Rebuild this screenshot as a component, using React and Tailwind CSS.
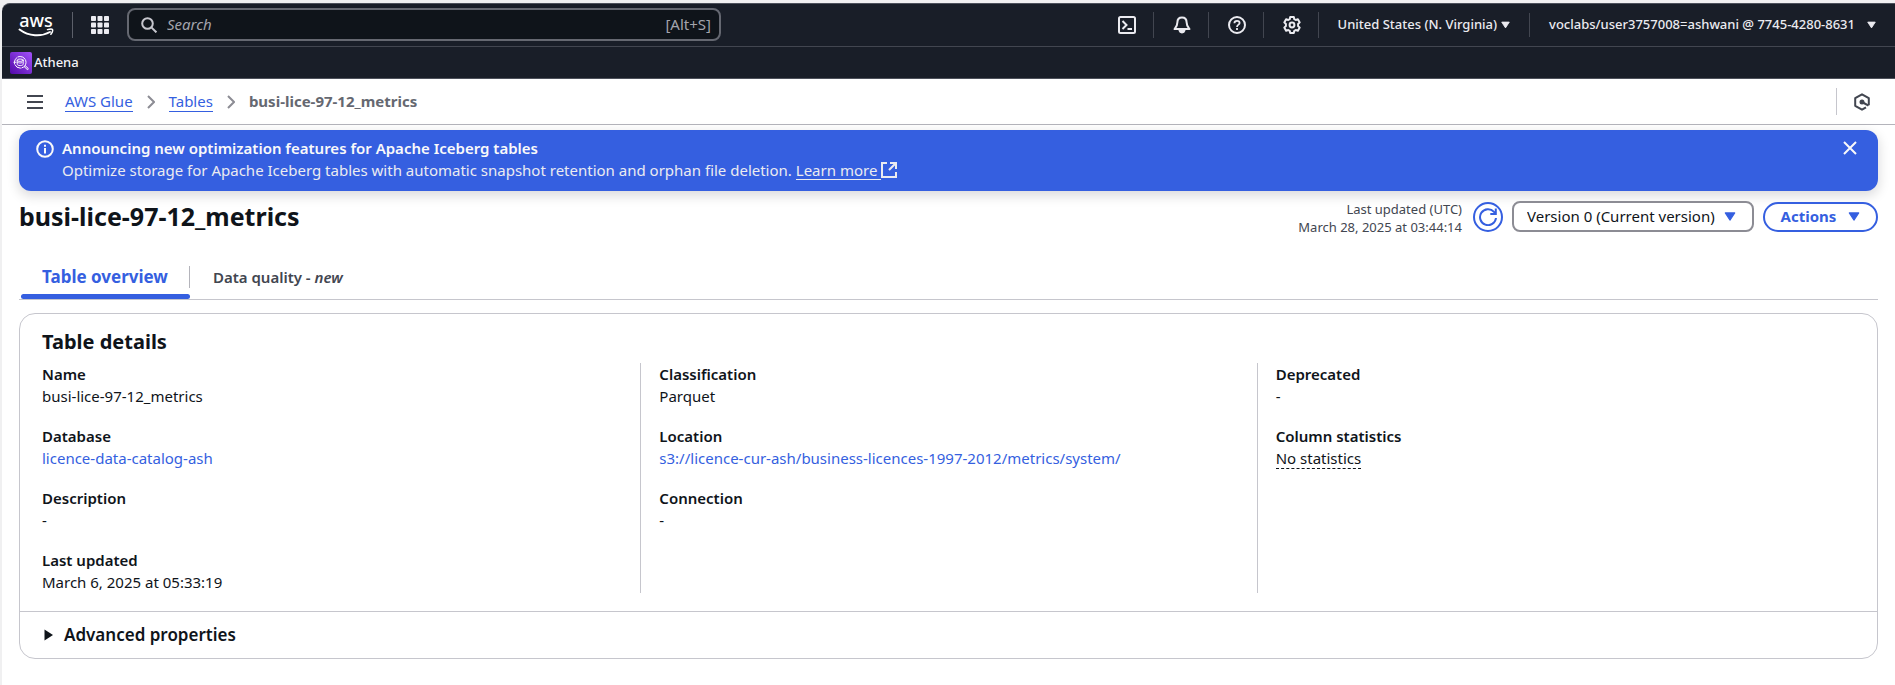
import React from 'react';

const fields = [
  [
    { label: 'Name', value: 'busi-lice-97-12_metrics' },
    { label: 'Database', value: 'licence-data-catalog-ash', kind: 'link' },
    { label: 'Description', value: '-' },
    { label: 'Last updated', value: 'March 6, 2025 at 05:33:19' },
  ],
  [
    { label: 'Classification', value: 'Parquet' },
    {
      label: 'Location',
      value: 's3://licence-cur-ash/business-licences-1997-2012/metrics/system/',
      kind: 'link',
    },
    { label: 'Connection', value: '-' },
  ],
  [
    { label: 'Deprecated', value: '-' },
    { label: 'Column statistics', value: 'No statistics', kind: 'hint' },
  ],
];

function Caret({ className }) {
  return (
    <svg viewBox="0 0 10 8" className={className} aria-hidden="true">
      <path d="M0.8 0.8h8.4L5 7.2z" fill="currentColor" stroke="currentColor" strokeWidth="1" strokeLinejoin="round" />
    </svg>
  );
}

function AwsLogo() {
  return (
    <a href="#home" aria-label="AWS home" className="flex w-9 flex-col items-center">
      <span className="h-4 text-lg leading-4 font-medium text-white">aws</span>
      <svg viewBox="0 0 36 9" className="h-[9px] w-9" fill="none" stroke="#fff" strokeLinecap="round" aria-hidden="true">
        <path d="M1.5 1.5C11 8.5 23 9 32 4" strokeWidth="2" />
        <path d="M29.5 1.6c2.4-.7 4.6-.8 5 0 .4.9-.3 3-1.6 4.700" strokeWidth="1.500" />
      </svg>
    </a>
  );
}

function GridIcon() {
  const cells = [0, 6.5, 13];
  return (
    <svg viewBox="0 0 18 18" className="size-[18px]" fill="currentColor" aria-hidden="true">
      {cells.map((y) => cells.map((x) => <rect key={`${x}-${y}`} x={x} y={y} width="5" height="5" rx="0.8" />))}
    </svg>
  );
}

function AthenaIcon() {
  return (
    <svg viewBox="0 0 22 22" className="size-[22px]" fill="none" stroke="#fff" strokeLinecap="round" aria-hidden="true">
      <defs>
        <linearGradient id="athena" x1="0" y1="1" x2="1" y2="0">
          <stop offset="0" stopColor="#5209a8" />
          <stop offset="1" stopColor="#a352fb" />
        </linearGradient>
      </defs>
      <rect width="22" height="22" rx="2" fill="url(#athena)" stroke="none" />
      <circle cx="10.200" cy="10.300" r="5.800" strokeWidth="1" strokeDasharray="7 1.200" />
      <ellipse cx="10.200" cy="8.200" rx="3" ry="1.200" strokeWidth=".9" />
      <path d="M7.200 8.200v4c0 .8 1.300 1.400 3 1.400s3-.6 3-1.400v-4M7.500 10.300c1.500.9 3 1 4.500.4M4 10.300h2" strokeWidth=".9" />
      <path d="M14.200 14.600l2.800 2.700c.9.800 1.800-.3 1-1.100L15.300 13.700" strokeWidth="1" />
    </svg>
  );
}

function NavIcon({ label, children }) {
  return (
    <button type="button" aria-label={label} className="flex h-[26px] w-[55px] items-center justify-center border-r border-[#424650] pl-0.5 text-[#ebebf0]">
      <svg viewBox="0 0 18 18" className="size-[18px]" fill="none" stroke="currentColor" strokeWidth="2" strokeLinejoin="round" aria-hidden="true">
        {children}
      </svg>
    </button>
  );
}

function TopNav() {
  return (
    <header className="rounded-tl-lg border-t border-b border-[#4d515b] bg-[#191e28] text-white">
      <div className="flex h-[43px] items-center border-b border-[#424650] pb-px">
        <div className="flex flex-1 items-center">
          <div className="flex h-[26px] items-center border-r border-[#5c606a] pr-[18px] pl-4">
            <AwsLogo />
          </div>
          <button type="button" aria-label="Services" className="px-[18px] text-[#ebebf0]">
            <GridIcon />
          </button>
          <label className="flex h-[33px] w-[594px] items-center rounded-lg border-2 border-[#656871] bg-[#0f141a] pr-2 pl-3">
            <svg viewBox="0 0 16 16" className="size-4 text-[#c6c6cd]" fill="none" stroke="currentColor" strokeWidth="2" aria-hidden="true">
              <circle cx="6.500" cy="6.500" r="5.300" />
              <path d="M10.400 10.400l5 5" />
            </svg>
            <input
              type="search"
              aria-label="Search"
              placeholder="Search"
              className="ml-2.5 min-w-0 flex-1 bg-transparent text-[15px] outline-none placeholder:text-[#a4a4ad] placeholder:italic"
            />
            <span className="text-[15px] text-[#a4a4ad]">[Alt+S]</span>
          </label>
        </div>
        <nav className="flex items-center text-[13px] font-medium text-[#ebebf0]">
          <NavIcon label="CloudShell">
            <rect x="1" y="1" width="16" height="16" rx="1.500" />
            <path d="M4.500 5l4 4-4 4M9.500 13h4.500" strokeLinejoin="miter" />
          </NavIcon>
          <NavIcon label="Notifications">
            <path d="M9 1.400C6 1.400 4.400 3.500 4.400 6.200c0 3.800-1.200 5-2.900 6.900h15c-1.700-1.900-2.900-3.100-2.900-6.900C13.600 3.500 12 1.400 9 1.400z" />
            <path d="M6.500 14.500a2.600 2.600 0 0 0 5 0z" fill="currentColor" />
          </NavIcon>
          <NavIcon label="Help">
            <circle cx="9" cy="9" r="8" />
            <path d="M6.400 7.200C6.400 5.600 7.600 4.800 9 4.800s2.600.9 2.600 2.200C11.600 8.700 9 8.600 9 11M9 12v2" strokeWidth="1.800" />
          </NavIcon>
          <NavIcon label="Settings">
            <path d="M7.200 1h3.600l.5 2.200 1.400.8 2.200-.7 1.800 3.100L15.100 8v2l1.600 1.600-1.800 3.100-2.200-.7-1.400.8-.5 2.200H7.200l-.5-2.200-1.400-.8-2.200.7-1.800-3.100L2.900 10V8L1.300 6.400l1.800-3.100 2.200.7 1.400-.8z" />
            <circle cx="9" cy="9" r="2.400" />
          </NavIcon>
          <button type="button" className="flex h-6 items-center gap-1 border-r border-[#424650] px-[19px]">
            United States (N. Virginia)
            <Caret className="h-2 w-[9px]" />
          </button>
          <button type="button" className="flex h-6 items-center gap-3 px-[19px]">
            voclabs/user3757008=ashwani @ 7745-4280-8631
            <Caret className="h-2 w-[9px]" />
          </button>
        </nav>
      </div>
      <div className="flex h-[31px] items-center pl-2">
        <a href="#athena" className="flex items-center gap-0.5 text-[13px] font-medium text-[#f3f3f7]">
          <AthenaIcon />
          Athena
        </a>
      </div>
    </header>
  );
}

function Chevron() {
  return (
    <svg viewBox="0 0 8 14" className="h-3.5 w-2 text-[#8c8c94]" fill="none" stroke="currentColor" strokeWidth="2" aria-hidden="true">
      <path d="M1 1l6 6-6 6" />
    </svg>
  );
}

function Breadcrumbs() {
  return (
    <div className="flex h-[46px] items-center border-b border-[#b4b4bb] px-[25px]">
      <button type="button" aria-label="Open navigation" className="text-[#424650]">
        <svg viewBox="0 0 16 14" className="h-3.5 w-4" stroke="currentColor" strokeWidth="2" aria-hidden="true">
          <path d="M0 1h16M0 7h16M0 13h16" />
        </svg>
      </button>
      <nav aria-label="Breadcrumbs" className="ml-[22px] flex flex-1 items-center gap-3.5 text-[15px] leading-5">
        <a href="#glue" className="border-b border-[#355fe0] text-[#355fe0]">AWS Glue</a>
        <Chevron />
        <a href="#tables" className="border-b border-[#355fe0] text-[#355fe0]">Tables</a>
        <Chevron />
        <span className="pb-px font-bold text-[#656871]">busi-lice-97-12_metrics</span>
      </nav>
      <div className="flex h-[27px] items-center border-l border-[#c6c6cd] pl-[17px]">
        <button type="button" aria-label="Open assistant" className="text-[#424650]">
          <svg viewBox="0 0 16 18" className="h-[18px] w-4" fill="none" stroke="currentColor" strokeWidth="2" strokeLinejoin="round" aria-hidden="true">
            <path d="M14.800 12.300V5.200L8 1.300 1.200 5.200v7.600L8 16.700l4-2.300" />
            <path d="M8 9l6.500 3.600" strokeWidth="2.200" />
            <circle cx="8" cy="9" r="1.500" fill="currentColor" />
          </svg>
        </button>
      </div>
    </div>
  );
}

function Banner() {
  return (
    <section className="flex items-start rounded-xl bg-[#355fe0] px-[17px] pt-[7px] pb-2.5 text-[15px] leading-[22px] text-[#f9f9fa] shadow-[0_4px_12px_1px_rgba(0,7,22,0.14)]">
      <svg viewBox="0 0 18 18" className="mt-[3px] size-[18px]" fill="none" stroke="currentColor" strokeWidth="2" aria-hidden="true">
        <circle cx="9" cy="9" r="7.800" />
        <path d="M9 8v5.500M9 4.800v2" />
      </svg>
      <div className="ml-2 flex-1">
        <h2 className="font-semibold">Announcing new optimization features for Apache Iceberg tables</h2>
        <p className="text-[#ebebf0]">
          Optimize storage for Apache Iceberg tables with automatic snapshot retention and orphan file deletion.{' '}
          <a href="#learn-more" className="inline-flex items-center">
            <span className="h-[21px] border-b border-current pr-1">Learn more</span>
            <svg viewBox="0 0 16 16" className="size-4" fill="none" stroke="currentColor" strokeWidth="2" aria-hidden="true">
              <path d="M6 1H1v14h14v-5M9 1h6v6M15 1L8 8" />
            </svg>
          </a>
        </p>
      </div>
      <button type="button" aria-label="Dismiss" className="mt-1 mr-1">
        <svg viewBox="0 0 14 14" className="size-3.5" stroke="currentColor" strokeWidth="2" aria-hidden="true">
          <path d="M1 1l12 12M13 1L1 13" />
        </svg>
      </button>
    </section>
  );
}

function TitleRow() {
  return (
    <div className="mt-2.5 flex items-center">
      <h1 className="flex-1 text-[25px] leading-[31px] font-bold">busi-lice-97-12_metrics</h1>
      <p className="-mt-[3px] -mb-[5px] mr-[11px] text-right text-[13px] leading-[18px] text-[#424650]">
        Last updated (UTC)
        <br />
        March 28, 2025 at 03:44:14
      </p>
      <button type="button" aria-label="Refresh" className="mr-[9px] flex size-[30px] items-center justify-center rounded-full border-2 border-[#355fe0] text-[#355fe0]">
        <svg viewBox="0 0 18 18" className="size-[18px]" fill="none" stroke="currentColor" strokeWidth="2" aria-hidden="true">
          <path d="M17 10a8 8 0 1 1-2-6.200l1.500 1.700" />
          <path d="M16.800 0.500v5.500h-5.500" />
        </svg>
      </button>
      <div className="relative mr-[9px] text-[15px]">
        <select aria-label="Table version" className="h-[31px] w-[242px] appearance-none rounded-lg border-2 border-[#8c8c94] bg-white pb-px pl-[13px]">
          <option>Version 0 (Current version)</option>
        </select>
        <Caret className="pointer-events-none absolute top-[11px] right-[18px] h-[9px] w-3 text-[#355fe0]" />
      </div>
      <button type="button" className="flex h-[30px] w-[115px] items-center justify-center gap-3 rounded-full border-2 border-[#355fe0] text-[15px] font-bold text-[#355fe0]">
        Actions
        <Caret className="h-[9px] w-3" />
      </button>
    </div>
  );
}

function Tabs() {
  return (
    <div role="tablist" className="mt-[30px] flex border-b border-[#c6c6cd] pl-0.5">
      <button type="button" role="tab" aria-selected="true" className="text-[17px] leading-[22px] font-bold text-[#355fe0]">
        <span className="mt-1 mb-1.5 flex border-r border-[#b4b4bb] px-[21px]">Table overview</span>
        <span className="block h-[5px] rounded-sm bg-[#355fe0]" />
      </button>
      <button type="button" role="tab" aria-selected="false" className="px-[23px] pb-[7px] text-[15px] leading-[22px] font-semibold text-[#424650]">
        Data quality - <em>new</em>
      </button>
    </div>
  );
}

function Field({ label, value, kind }) {
  return (
    <div>
      <dt className="font-semibold">{label}</dt>
      <dd>
        {kind === 'link' ? (
          <a href={`#${label}`} className="text-[#355fe0]">{value}</a>
        ) : kind === 'hint' ? (
          <button type="button" className="border-b border-dashed border-current leading-5">{value}</button>
        ) : (
          value
        )}
      </dd>
    </div>
  );
}

function DetailsCard() {
  return (
    <section className="mt-[13px] rounded-2xl border border-[#c6c6cd]">
      <div className="px-[22px] pt-3.5 pb-[18px]">
        <h2 className="text-xl leading-7 font-bold">Table details</h2>
        <div className="mt-[7px] grid grid-cols-3 gap-x-9 text-[15px] leading-[22px]">
          {fields.map((column, i) => (
            <dl key={column[0].label} className={i ? '-ml-[18px] flex flex-col gap-[18px] border-l border-[#c6c6cd] pl-[18px]' : 'flex flex-col gap-[18px]'}>
              {column.map((field) => (
                <Field key={field.label} {...field} />
              ))}
            </dl>
          ))}
        </div>
      </div>
      <button type="button" aria-expanded="false" className="flex h-[47px] w-full items-center gap-[11px] border-t border-[#c6c6cd] px-6 text-[17px] font-semibold">
        <svg viewBox="0 0 9 12" className="h-3 w-[9px]" fill="currentColor" aria-hidden="true">
          <path d="M0.500 0.500v11L9 6z" />
        </svg>
        Advanced properties
      </button>
    </section>
  );
}

export default function App() {
  return (
    <div className="min-h-screen bg-[#f0f0f1] pt-[3px] pl-0.5 font-['Noto_Sans',sans-serif] text-[#0f141a]">
      <div className="min-h-[calc(100vh-3px)] rounded-tl-lg bg-white">
        <TopNav />
        <Breadcrumbs />
        <main className="px-[17px] pt-[5px] pb-6">
          <Banner />
          <TitleRow />
          <Tabs />
          <DetailsCard />
        </main>
      </div>
    </div>
  );
}
